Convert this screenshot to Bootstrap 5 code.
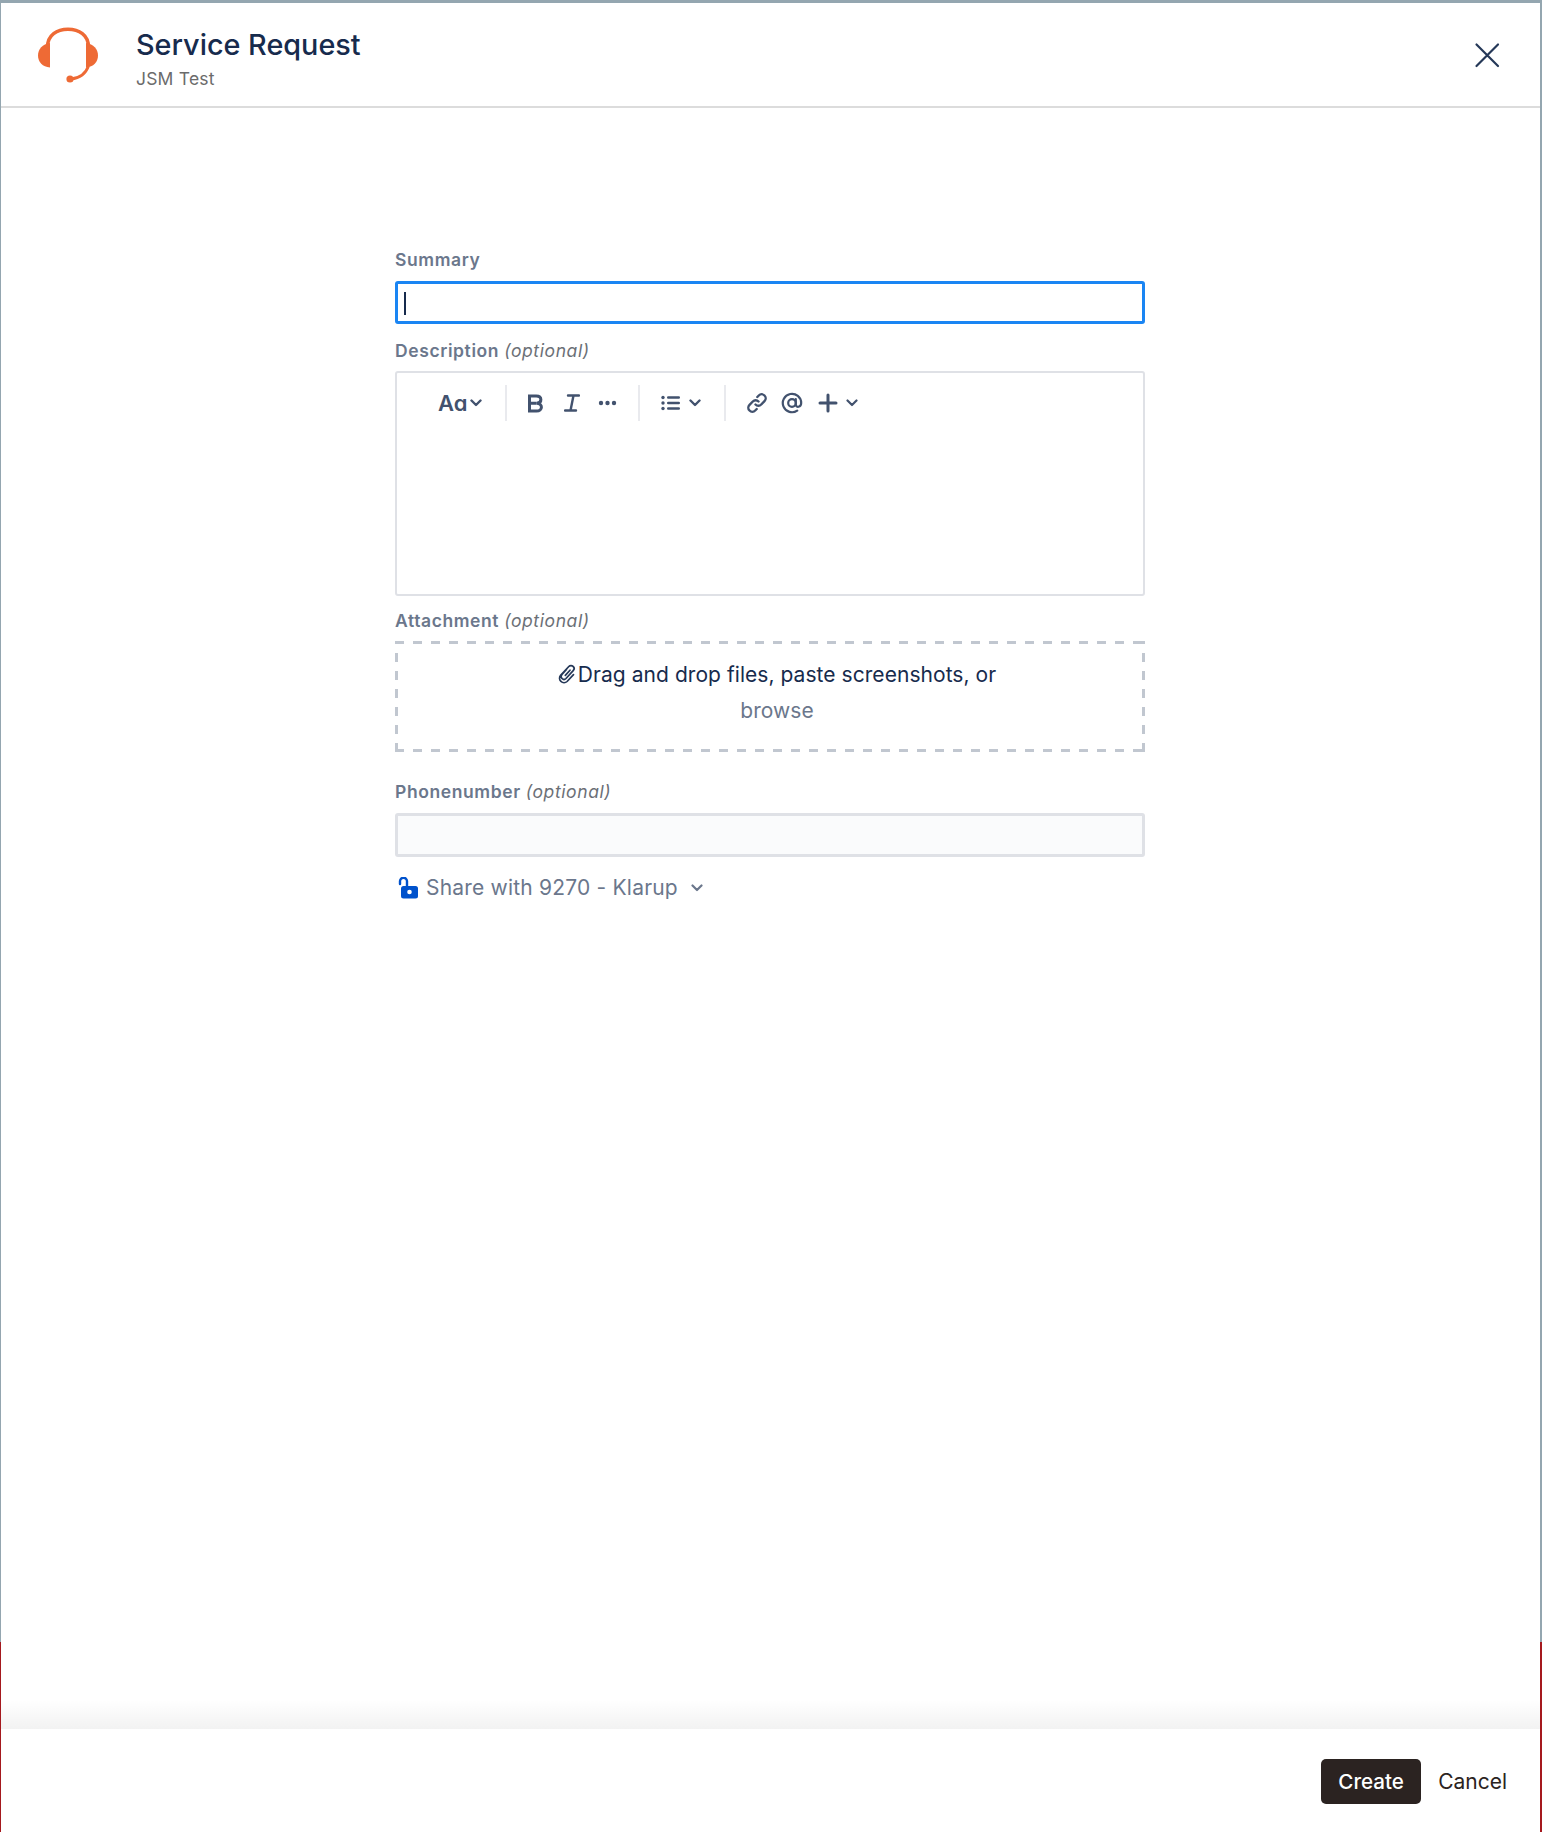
<!DOCTYPE html>
<html>
<head>
    <meta charset="utf-8">
    <title>Service Request</title>
    <link rel="stylesheet" href="https://cdn.jsdelivr.net/npm/bootstrap@5.3.0/dist/css/bootstrap.min.css">
    <style>
        html, body { height: 100%; }
        body {
            font-family: Inter, "Liberation Sans", sans-serif;
            background: linear-gradient(#94a6b0 0, #94a6b0 1642px, #a5191e 1642px, #a5191e 100%);
        }
        .shell { height: 1832px; padding: 3px 2px 0 1px; }
        .panel { background: #fff; height: 100%; }
        .head-bar { height: 105px; border-bottom: 2px solid #dcdcdc; padding: 0 38px 0 36px; }
        .head-logo { width: 62px; height: 62px; margin-right: 37px; margin-top: 2px; }
        .head-title { font-size: 28.800px; font-weight: 500; line-height: 34px; color: #172b4d; margin-top: 7px; }
        .head-sub { font-size: 17.500px; line-height: 20px; color: #6b6b6b; margin-top: 7px; letter-spacing: .2px; }
        .close-btn { width: 30px; height: 30px; background: none; border: 0; padding: 0; }
        .form-col { width: 750px; padding-top: 142px; margin-left: 394px; }
        .lbl { font-size: 17.500px; line-height: 20px; font-weight: 600; color: #6b778c; margin-bottom: 11px; letter-spacing: .6px; }
        .lbl em { font-weight: 400; color: #6b6f76; }
        .lbl-tight { margin-bottom: 10px; }
        .fake-input { border-radius: 3px; }
        .summary-box { height: 43px; border: 3px solid #1a85f3; padding: 8px 6px; margin-bottom: 17px; }
        .caret-line { width: 2px; height: 23px; background: #172b4d; }
        .editor-box { height: 225px; border: 2px solid #dfe1e6; border-radius: 3px; margin-bottom: 15px; }
        .tool-row { height: 36px; margin-top: 12px; padding-left: 41px; color: #42526e; }
        .tool-sep { width: 2px; height: 36px; background: #e9eaee; }
        .tool-aa { font-size: 22px; font-weight: 600; line-height: 26px; color: #42526e; font-feature-settings: "cv11"; }
        .drop-box {
            height: 111px; margin-bottom: 30px; padding-top: 13px; padding-left: 14px; border: 3px solid transparent; font-size: 21px; letter-spacing: .05px;
            background-image:
                repeating-linear-gradient(90deg, #c1c7d0 0 9px, transparent 9px 18px),
                repeating-linear-gradient(90deg, #c1c7d0 0 9px, transparent 9px 18px),
                repeating-linear-gradient(0deg, #c1c7d0 0 9px, transparent 9px 18px),
                repeating-linear-gradient(0deg, #c1c7d0 0 9px, transparent 9px 18px);
            background-size: 100% 3px, 100% 3px, 3px 100%, 3px 100%;
            background-position: 0 0, 0 100%, 0 0, 100% 0;
            background-origin: border-box;
            background-repeat: no-repeat;
        }
        .drop-line { line-height: 36px; color: #172b4d; white-space: nowrap; }
        .drop-browse { line-height: 36px; color: #6b778c; }
        .phone-box { height: 44px; border: 3px solid #dfe1e6; background: #fafbfc; margin-bottom: 17px; }
        .share-row { font-size: 21px; line-height: 28px; color: #6b778c; letter-spacing: .2px; }
        .foot-shade { height: 29px; background: linear-gradient(rgba(0,0,0,0), rgba(0,0,0,.05)); }
        .foot-bar { height: 103px; padding: 30px 33px 0 0; }
        .btn-create { background: #2b2321; color: #fff; font-size: 20.600px; line-height: 25px; padding: 10px 0; border: 0; border-radius: 5px; height: 45px; width: 100px; font-weight: 500; }
        .btn-cancel { background: none; border: 0; padding: 0; color: #2b2321; font-size: 21px; line-height: 45px; margin-left: 17px; }
    </style>
</head>
<body class="m-0">
<div class="shell">
    <div class="panel d-flex flex-column">
        <!-- 头部 -->
        <div class="head-bar d-flex align-items-center">
            <svg class="head-logo" viewBox="0 0 62 62">
                <path d="M10.500 22C10.500 10 20 4.200 31 4.200S51.500 10 51.500 22" fill="none" stroke="#ee6a35" stroke-width="3.400"/>
                <path d="M13 18V42.500C5.500 42 1 37 1 30.500S5.500 19 13 18Z" fill="#ee6a35"/>
                <path d="M49 18V42.500C56.500 42 61 37 61 30.500S56.500 19 49 18Z" fill="#ee6a35"/>
                <path d="M51.500 41C49 48 44 53 34 54" fill="none" stroke="#ee6a35" stroke-width="2.800"/>
                <circle cx="33" cy="54" r="3.600" fill="#ee6a35"/>
            </svg>
            <div class="flex-grow-1">
                <div class="head-title">Service Request</div>
                <div class="head-sub">JSM Test</div>
            </div>
            <button class="close-btn" type="button" aria-label="Close">
                <svg width="30" height="30" viewBox="0 0 30 30"><path d="M4.500 4.500 26 26M26 4.500 4.500 26" stroke="#253858" stroke-width="2.200" stroke-linecap="round"/></svg>
            </button>
        </div>

        <!-- 表单 -->
        <div class="flex-grow-1">
            <div class="form-col">
                <div class="lbl">Summary</div>
                <div class="fake-input summary-box"><div class="caret-line"></div></div>

                <div class="lbl lbl-tight">Description <em>(optional)</em></div>
                <div class="editor-box">
                    <div class="tool-row d-flex align-items-center">
                        <span class="tool-aa">Aa</span>
                        <svg style="margin-left:3px" width="12" height="8" viewBox="0 0 12 8"><path d="M1.500 1.500 6 6l4.500-4.500" fill="none" stroke="#42526e" stroke-width="2.400" stroke-linecap="round" stroke-linejoin="round"/></svg>
                        <div class="tool-sep" style="margin-left:23px"></div>
                        <svg style="margin-left:20px" width="17" height="19" viewBox="0 0 17 19"><path d="M2.500 2h6.800c6 0 6 6.800 .5 7.200C16 9.500 16 17 9.500 17H2.500Z M2.500 9.300h7" fill="none" stroke="#42526e" stroke-width="3"/></svg>
                        <svg style="margin-left:20px" width="16" height="18" viewBox="0 0 16 18"><path d="M4 1.500h11M1 16.500h11M9.500 1.500 6.500 16.500" fill="none" stroke="#42526e" stroke-width="2.400" stroke-linecap="round"/></svg>
                        <svg style="margin-left:18px" width="19" height="6" viewBox="0 0 19 6"><circle cx="3" cy="3" r="2.200" fill="#42526e"/><circle cx="9.500" cy="3" r="2.200" fill="#42526e"/><circle cx="16" cy="3" r="2.200" fill="#42526e"/></svg>
                        <div class="tool-sep" style="margin-left:21px"></div>
                        <svg style="margin-left:21px" width="19" height="16" viewBox="0 0 19 16"><g fill="#42526e"><circle cx="2" cy="2.500" r="1.700"/><circle cx="2" cy="8" r="1.700"/><circle cx="2" cy="13.500" r="1.700"/><rect x="6" y="1.200" width="13" height="2.600" rx="1.200"/><rect x="6" y="6.700" width="13" height="2.600" rx="1.200"/><rect x="6" y="12.200" width="13" height="2.600" rx="1.200"/></g></svg>
                        <svg style="margin-left:9px" width="12" height="8" viewBox="0 0 12 8"><path d="M1.500 1.500 6 6l4.500-4.500" fill="none" stroke="#42526e" stroke-width="2.400" stroke-linecap="round" stroke-linejoin="round"/></svg>
                        <div class="tool-sep" style="margin-left:23px"></div>
                        <svg style="margin-left:20px" width="22" height="22" viewBox="0 0 22 22"><path d="M9.500 12.500a4 4 0 0 0 5.700 0l3.300-3.300a4 4 0 0 0-5.700-5.700l-1.500 1.500M12.500 9.500a4 4 0 0 0-5.700 0l-3.300 3.300a4 4 0 0 0 5.700 5.700l1.500-1.500" fill="none" stroke="#42526e" stroke-width="2.400" stroke-linecap="round"/></svg>
                        <svg style="margin-left:13px" width="22" height="22" viewBox="0 0 22 22"><circle cx="11" cy="11" r="3.800" fill="none" stroke="#42526e" stroke-width="2.200"/><path d="M14.800 7v5.500c0 3.500 5.400 3 5.400-1.500a9.200 9.200 0 1 0-4 7.600" fill="none" stroke="#42526e" stroke-width="2.200" stroke-linecap="round"/></svg>
                        <svg style="margin-left:15px" width="20" height="20" viewBox="0 0 20 20"><path d="M10 2v16M2 10h16" stroke="#42526e" stroke-width="3" stroke-linecap="round"/></svg>
                        <svg style="margin-left:8px" width="12" height="8" viewBox="0 0 12 8"><path d="M1.500 1.500 6 6l4.500-4.500" fill="none" stroke="#42526e" stroke-width="2.200" stroke-linecap="round" stroke-linejoin="round"/></svg>
                    </div>
                </div>

                <div class="lbl lbl-tight">Attachment <em>(optional)</em></div>
                <div class="drop-box text-center">
                    <div class="drop-line">
                        <svg class="align-text-top" width="19" height="20" viewBox="0 0 19 20" style="margin-top:2px;margin-right:1px"><path d="M8.500 5.500 4 10.500a2.800 2.800 0 0 0 4 4l7.200-7.800a3 3 0 0 0-4.400-4.200L2.600 11.300a4.500 4.500 0 0 0 6.500 6.200l6.400-6.800M12 6.200 7.300 11.400" fill="none" stroke="#253858" stroke-width="1.700" stroke-linecap="round"/></svg>Drag and drop files, paste screenshots, or
                    </div>
                    <div class="drop-browse">browse</div>
                </div>

                <div class="lbl">Phonenumber <em>(optional)</em></div>
                <div class="fake-input phone-box"></div>

                <div class="share-row d-flex align-items-center">
                    <svg width="21" height="22" viewBox="0 0 21 22" style="margin-left:3px;margin-right:7px"><path d="M2 7V4.500a3.500 3.500 0 0 1 7-.5V9" fill="none" stroke="#0052cc" stroke-width="2.400" stroke-linecap="round"/><rect x="3" y="9" width="17" height="12.500" rx="2.500" fill="#0052cc"/><circle cx="11.500" cy="15" r="2.300" fill="#fff"/></svg>
                    <span>Share with 9270 - Klarup</span>
                    <svg style="margin-left:13px" width="12" height="8" viewBox="0 0 12 8"><path d="M1.500 1.500 6 6l4.500-4.500" fill="none" stroke="#6b778c" stroke-width="2.200" stroke-linecap="round" stroke-linejoin="round"/></svg>
                </div>
            </div>
        </div>

        <!-- 底部按钮 -->
        <div class="foot-shade"></div>
        <div class="foot-bar d-flex justify-content-end align-items-start">
            <button class="btn-create" type="button">Create</button>
            <button class="btn-cancel" type="button">Cancel</button>
        </div>
    </div>
</div>
<script src="https://cdn.jsdelivr.net/npm/bootstrap@5.3.0/dist/js/bootstrap.bundle.min.js"></script>
</body>
</html>
